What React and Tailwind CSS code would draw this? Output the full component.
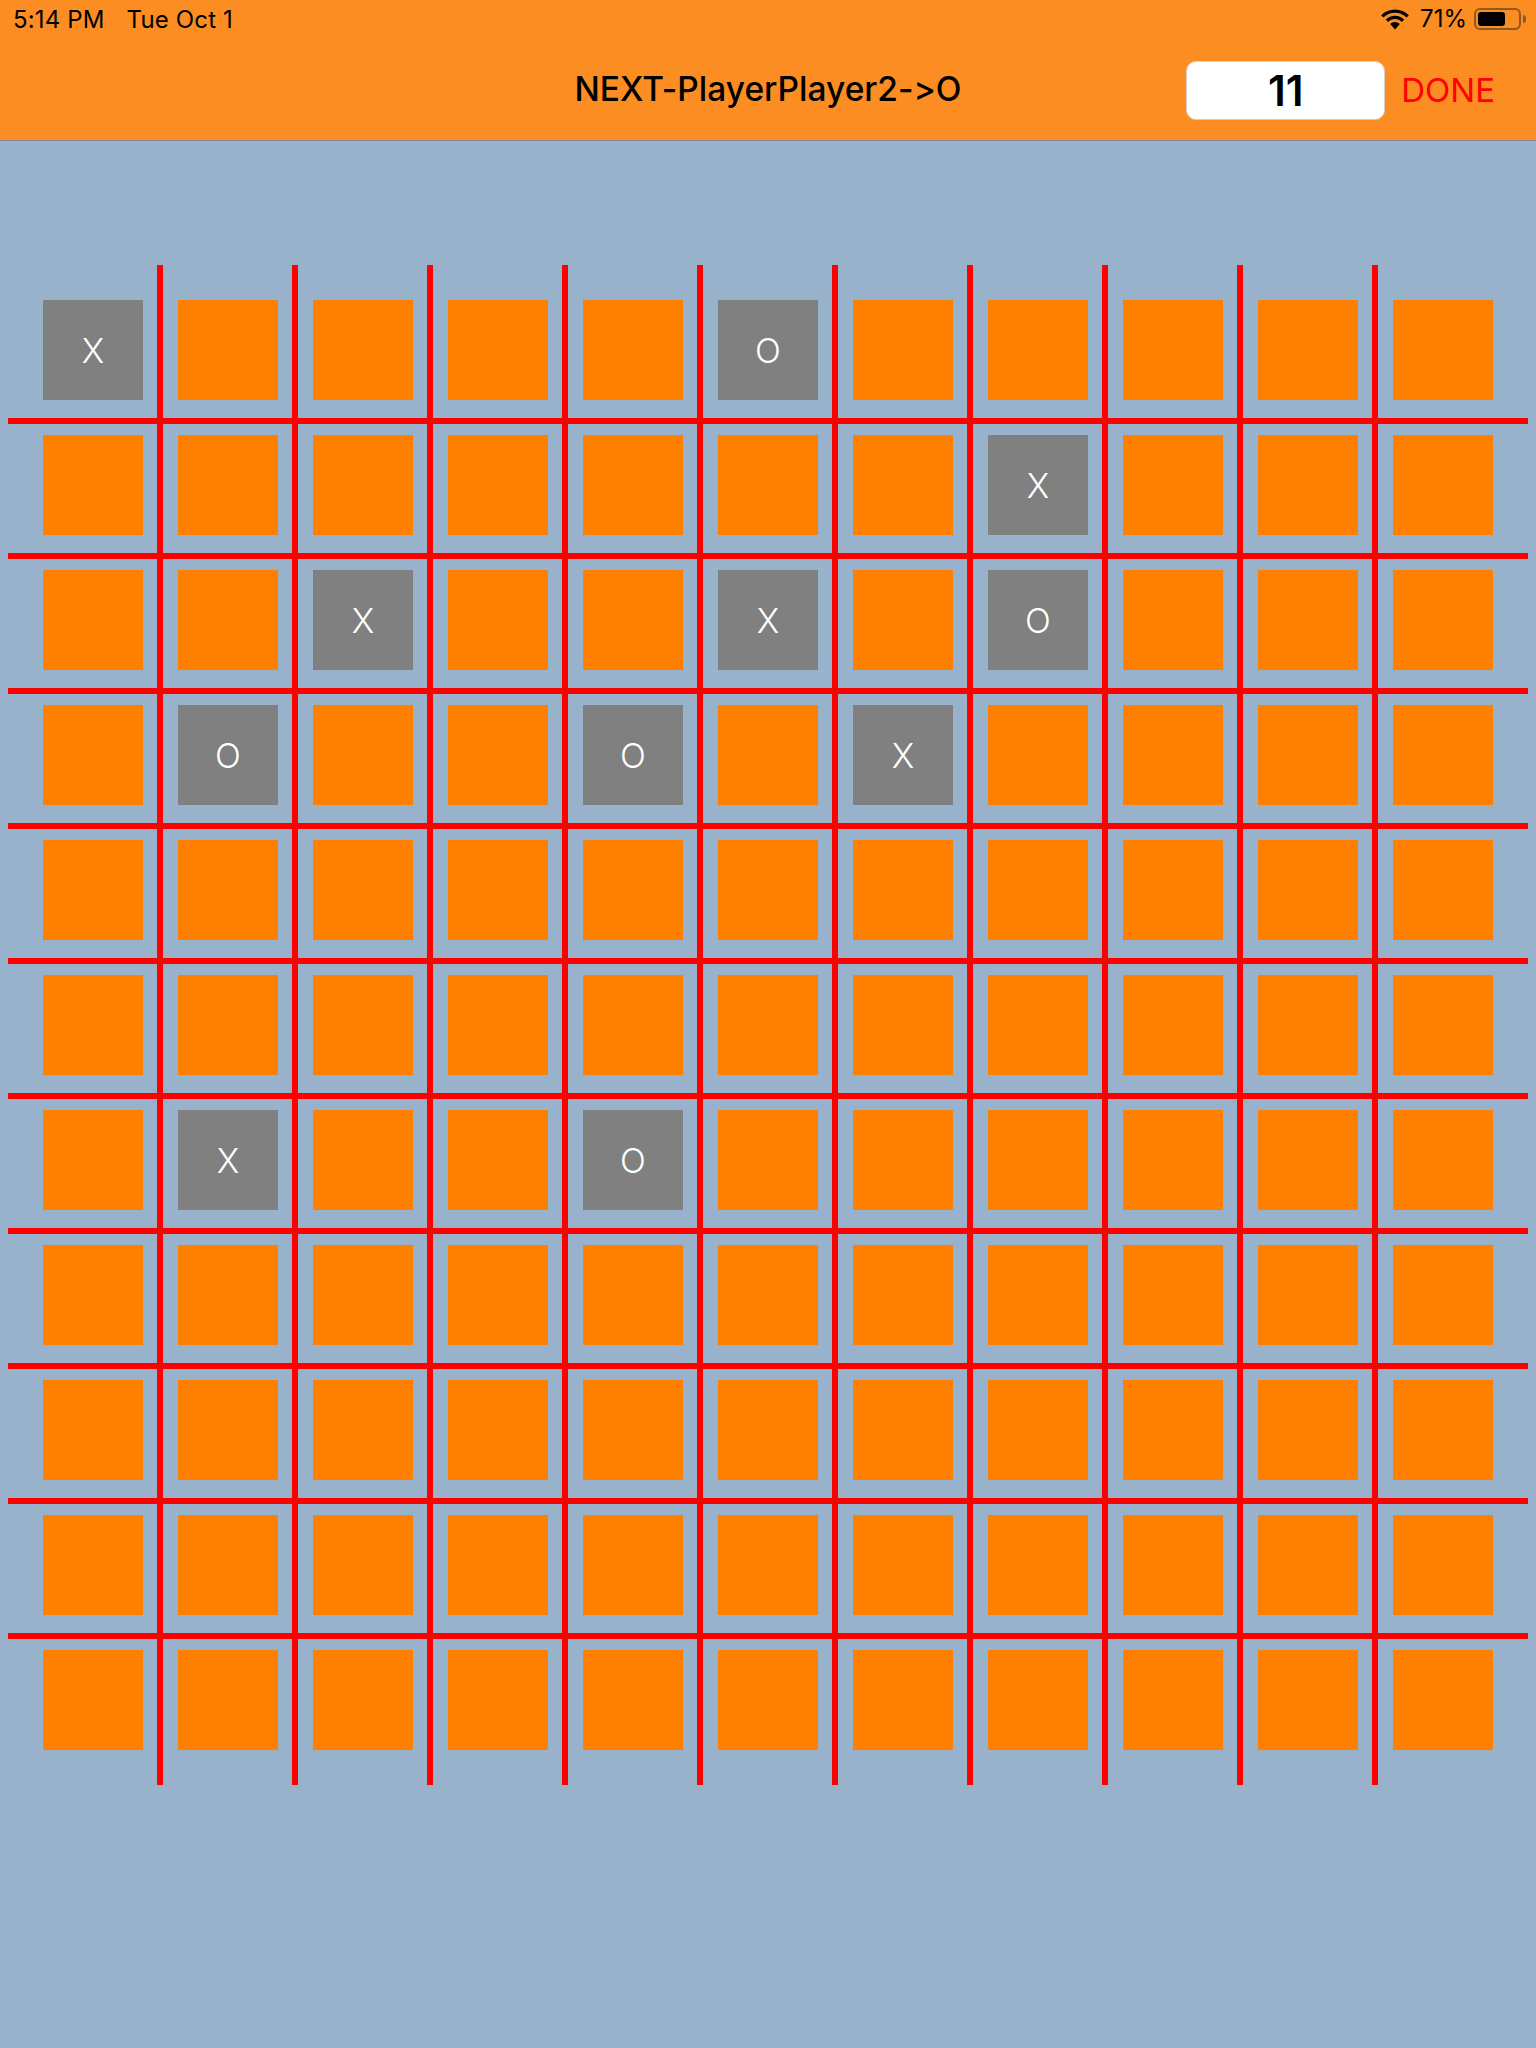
import React from "react";

const SIZE = 11;

// moves already played, keyed by "row-col"
const moves = {
  "0-0": "X",
  "0-5": "O",
  "1-7": "X",
  "2-2": "X",
  "2-5": "X",
  "2-7": "O",
  "3-1": "O",
  "3-4": "O",
  "3-6": "X",
  "6-1": "X",
  "6-4": "O",
};

const StatusBar = () => (
  <div className="flex h-[36px] items-center justify-between pl-[13px] pr-[10px] pt-[2px] text-[24px] leading-none text-black">
    <div className="flex gap-[22px] pt-[2px] tracking-[0.15px]">
      <span>5:14 PM</span>
      <span>Tue Oct 1</span>
    </div>
    <div className="flex items-center">
      <svg width="28" height="21" viewBox="0 0 28 21" className="mr-[11px]">
        <path d="M14 0.500C8.700 0.500 3.800 2.700 0.200 6.300L2.400 8.600C5.400 5.600 9.500 3.800 14 3.800s8.600 1.800 11.600 4.800l2.200-2.300C24.200 2.700 19.300 0.500 14 0.500z" fill="#000" />
        <path d="M14 6.800c-3.500 0-6.800 1.400-9.200 3.800l2.300 2.300c1.800-1.800 4.200-2.900 6.900-2.900s5.100 1.100 6.900 2.900l2.300-2.300C20.800 8.200 17.500 6.800 14 6.800z" fill="#000" />
        <path d="M14 13c-1.900 0-3.600.7-4.800 2L14 20.500l4.800-5.500C17.600 13.700 15.900 13 14 13z" fill="#000" />
      </svg>
      <span className="mr-[7px]">71%</span>
      <div className="flex h-[22px] w-[47px] items-center rounded-[6px] border-2 border-[#8f5a1f] p-[2px]">
        <div className="h-full w-[27px] rounded-[3px] bg-black" />
      </div>
      <div className="ml-[2px] h-[8px] w-[3px] rounded-r-full bg-[#8f5a1f]" />
    </div>
  </div>
);

const Header = () => (
  <header className="h-[141px] border-b border-[#7f8a96] bg-[#fb8d22]">
    <StatusBar />
    <div className="relative flex h-[104px] items-center justify-center">
      <h1 className="pt-[3px] text-[33.5px] font-medium leading-none text-black [font-feature-settings:'calt'_0]">
        NEXT-PlayerPlayer2-&gt;O
      </h1>
      <div className="absolute right-[41px] top-[25px] flex items-center gap-[16px]">
        <div className="flex h-[59px] w-[199px] items-center justify-center rounded-[10px] border border-[#d8d0c8] bg-white text-[42px] font-semibold text-black">
          11
        </div>
        <button className="text-[33px] leading-none text-[#ff0000]">DONE</button>
      </div>
    </div>
  </header>
);

const Cell = ({ mark }) => (
  <div
    className={`flex h-[100px] w-[100px] items-center justify-center pt-[1px] text-[34px] font-[350] leading-none text-white ${
      mark ? "bg-[#808080]" : "bg-[#ff7f00]"
    }`}
  >
    {mark}
  </div>
);

const Board = () => {
  const cells = [];
  for (let r = 0; r < SIZE; r++) {
    for (let c = 0; c < SIZE; c++) {
      cells.push(<Cell key={`${r}-${c}`} mark={moves[`${r}-${c}`]} />);
    }
  }
  const lines = Array.from({ length: SIZE - 1 }, (_, i) => i);

  return (
    <div className="relative h-[1520px] w-[1520px]">
      <div className="grid grid-cols-[repeat(11,100px)] gap-[35px] p-[35px]">{cells}</div>
      {/* the red grid lines sit over the board */}
      {lines.map((i) => (
        <div
          key={`v${i}`}
          className="absolute inset-y-0 w-[6px] bg-[#ff0000]"
          style={{ left: 149 + i * 135 }}
        />
      ))}
      {lines.map((i) => (
        <div
          key={`h${i}`}
          className="absolute inset-x-0 h-[6px] bg-[#ff0000]"
          style={{ top: 153 + i * 135 }}
        />
      ))}
    </div>
  );
};

export default function App() {
  return (
    <div className="h-[2048px] w-[1536px] bg-[#98b2cc] font-['Inter',sans-serif]">
      <Header />
      <main className="pl-[8px] pt-[124px]">
        <Board />
      </main>
    </div>
  );
}
